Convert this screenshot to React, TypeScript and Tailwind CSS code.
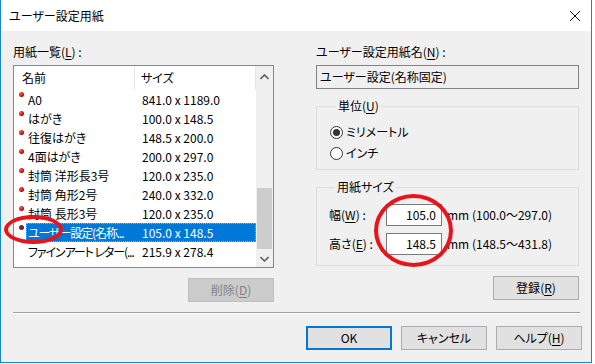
import React from 'react';

const rows = [
  { name: 'A0', size: '841.0 x 1189.0', dot: true },
  { name: 'はがき', size: '100.0 x 148.5', dot: true },
  { name: '往復はがき', size: '148.5 x 200.0', dot: true },
  { name: '4面はがき', size: '200.0 x 297.0', dot: true },
  { name: '封筒 洋形長3号', size: '120.0 x 235.0', dot: true },
  { name: '封筒 角形2号', size: '240.0 x 332.0', dot: true },
  { name: '封筒 長形3号', size: '120.0 x 235.0', dot: true },
  { name: 'ユーザー設定(名称...', size: '105.0 x 148.5', dot: true, selected: true, tight: true },
  { name: 'ファインアート レター(...', size: '215.9 x 278.4', dot: false, tight: true },
];

// mnemonic letter with underline, e.g. (L)
const Key = ({ k }: { k: string }) => (
  <>
    (<span className="underline underline-offset-2">{k}</span>)
  </>
);

const Btn = ({ children, className = '' }: { children: React.ReactNode; className?: string }) => (
  <div className={`flex items-center justify-center w-[86px] h-[24px] bg-[#e1e1e1] border border-[#adadad] ${className}`}>
    {children}
  </div>
);

export default function App() {
  return (
    <div className="relative w-[595px] h-[364px] bg-white font-['Noto_Sans_CJK_JP',sans-serif] [font-feature-settings:'palt'] text-[12px] leading-[16px] text-black">
      <div className="flex flex-col w-[592px] h-[363px] border-x border-b border-[#1883d7]">
        {/* title bar */}
        <div className="flex items-center justify-between h-[31px] bg-white pl-[8px] pr-[8px] shrink-0">
          <span>ユーザー設定用紙</span>
          <svg width="12" height="12" viewBox="0 0 12 12" className="mr-[2px]">
            <path d="M1 1 L11 11 M11 1 L1 11" stroke="#111" strokeWidth="1" />
          </svg>
        </div>

        <div className="flex-1 bg-[#f0f0f0] pt-[13px]">
          <div className="flex gap-[42px] px-[12px]">
            {/* left column */}
            <div className="flex flex-col w-[263px]">
              <div>用紙一覧<Key k="L" /> :</div>
              <div className="mt-[5px] h-[203px] border border-[#828790] bg-white flex overflow-hidden">
                <div className="flex-1 flex flex-col">
                  <div className="flex items-center h-[24px] shrink-0">
                    <div className="w-[121px] pl-[8px] h-full flex items-center border-r border-[#e5e5e5]">名前</div>
                    <div className="flex-1 pl-[6px] h-full flex items-center border-r border-[#e5e5e5]">サイズ</div>
                  </div>
                  {rows.map((r, i) => (
                    <div key={i} className="flex h-[19px] shrink-0">
                      <div className="w-[12px] pl-[5px] pt-[2px]">
                        {r.dot && (
                          <div className={`w-[5px] h-[5px] rounded-full ${r.selected ? 'bg-[#8a1a2a]' : 'bg-[radial-gradient(circle_at_35%_35%,#ff6060,#d00000_60%,#900000)]'}`} />
                        )}
                      </div>
                      <div
                        className={`flex flex-1 items-center ${r.selected ? 'bg-[#0078d7] text-white outline outline-1 outline-dotted outline-[#f0a040] -outline-offset-1' : ''}`}
                      >
                        <div className={`w-[116px] pl-[2px] whitespace-nowrap overflow-hidden ${r.tight ? 'tracking-[-1.1px]' : ''}`}>{r.name}</div>
                        <div className="whitespace-nowrap">{r.size}</div>
                      </div>
                    </div>
                  ))}
                </div>
                {/* scrollbar */}
                <div className="w-[17px] bg-[#f0f0f0] flex flex-col items-center">
                  <div className="h-[17px] w-full flex items-center justify-center mt-[2px]">
                    <svg width="9" height="6" viewBox="0 0 9 6">
                      <path d="M0.5 5 L4.5 1 L8.5 5" stroke="#606060" strokeWidth="1.6" fill="none" />
                    </svg>
                  </div>
                  <div className="flex-1 w-full flex flex-col">
                    <div className="h-[103px]" />
                    <div className="h-[61px] mx-[1px] bg-[#cdcdcd]" />
                  </div>
                  <div className="h-[17px] w-full flex items-center justify-center">
                    <svg width="9" height="6" viewBox="0 0 9 6">
                      <path d="M0.5 1 L4.5 5 L8.5 1" stroke="#606060" strokeWidth="1.6" fill="none" />
                    </svg>
                  </div>
                </div>
              </div>
              <Btn className="mt-[10px] self-end !bg-[#cccccc] !border-[#bfbfbf] text-[#838383]">
                <span>削除<Key k="D" /></span>
              </Btn>
            </div>

            {/* right column */}
            <div className="flex flex-col w-[264px]">
              <div>ユーザー設定用紙名<Key k="N" /> :</div>
              <div className="mt-[5px] h-[24px] border border-[#838383] bg-[#f0f0f0] flex items-center pl-[3px]">
                ユーザー設定(名称固定)
              </div>

              <fieldset className="mt-[9px] w-[263px] border border-[#dcdcdc] pl-[13px] pb-[8px]">
                <legend className="ml-[6px] px-[2px]">単位<Key k="U" /></legend>
                <div className="flex items-center gap-[3px] mt-[10px]">
                  <div className="w-[13px] h-[13px] rounded-full border border-[#333] bg-white flex items-center justify-center">
                    <div className="w-[7px] h-[7px] rounded-full bg-[#333]" />
                  </div>
                  <span>ミリメートル</span>
                </div>
                <div className="flex items-center gap-[3px] mt-[5px]">
                  <div className="w-[13px] h-[13px] rounded-full border border-[#333] bg-white" />
                  <span>インチ</span>
                </div>
              </fieldset>

              <fieldset className="mt-[9px] w-[263px] border border-[#dcdcdc] pl-[12px] pb-[10px]">
                <legend className="ml-[6px] px-[2px]">用紙サイズ</legend>
                <div className="flex items-center mt-[9px]">
                  <span className="w-[57px]">幅<Key k="W" /> :</span>
                  <div className="w-[56px] h-[22px] border border-[#7a7a7a] bg-white flex items-center justify-end pr-[5px]">105.0</div>
                  <span className="ml-[5px]">mm (100.0〜297.0)</span>
                </div>
                <div className="flex items-center mt-[7px]">
                  <span className="w-[57px]">高さ<Key k="E" /> :</span>
                  <div className="w-[56px] h-[22px] border border-[#7a7a7a] bg-white flex items-center justify-end pr-[5px]">148.5</div>
                  <span className="ml-[5px]">mm (148.5〜431.8)</span>
                </div>
              </fieldset>

              <Btn className="mt-[10px] self-end">
                <span>登録<Key k="R" /></span>
              </Btn>
            </div>
          </div>

          {/* separator */}
          <div className="mx-[12px] mt-[10px] w-[567px] h-[2px] border-t border-[#a0a0a0] border-b border-b-white" />

          {/* bottom buttons */}
          <div className="flex justify-end gap-[9px] pr-[9px] mt-[12px]">
            <Btn className="!border-2 !border-[#0078d7] w-[85px]">OK</Btn>
            <Btn>キャンセル</Btn>
            <Btn>
              <span>ヘルプ<Key k="H" /></span>
            </Btn>
          </div>
        </div>
      </div>

      {/* red annotation circles */}
      <div className="absolute left-[4px] top-[215px] w-[59px] h-[29px] rounded-[50%] border-[4px] border-[#e8141c]" />
      <div className="absolute left-[374px] top-[194px] w-[79px] h-[73px] rounded-[50%] border-[4px] border-[#e8141c]" />
    </div>
  );
}
